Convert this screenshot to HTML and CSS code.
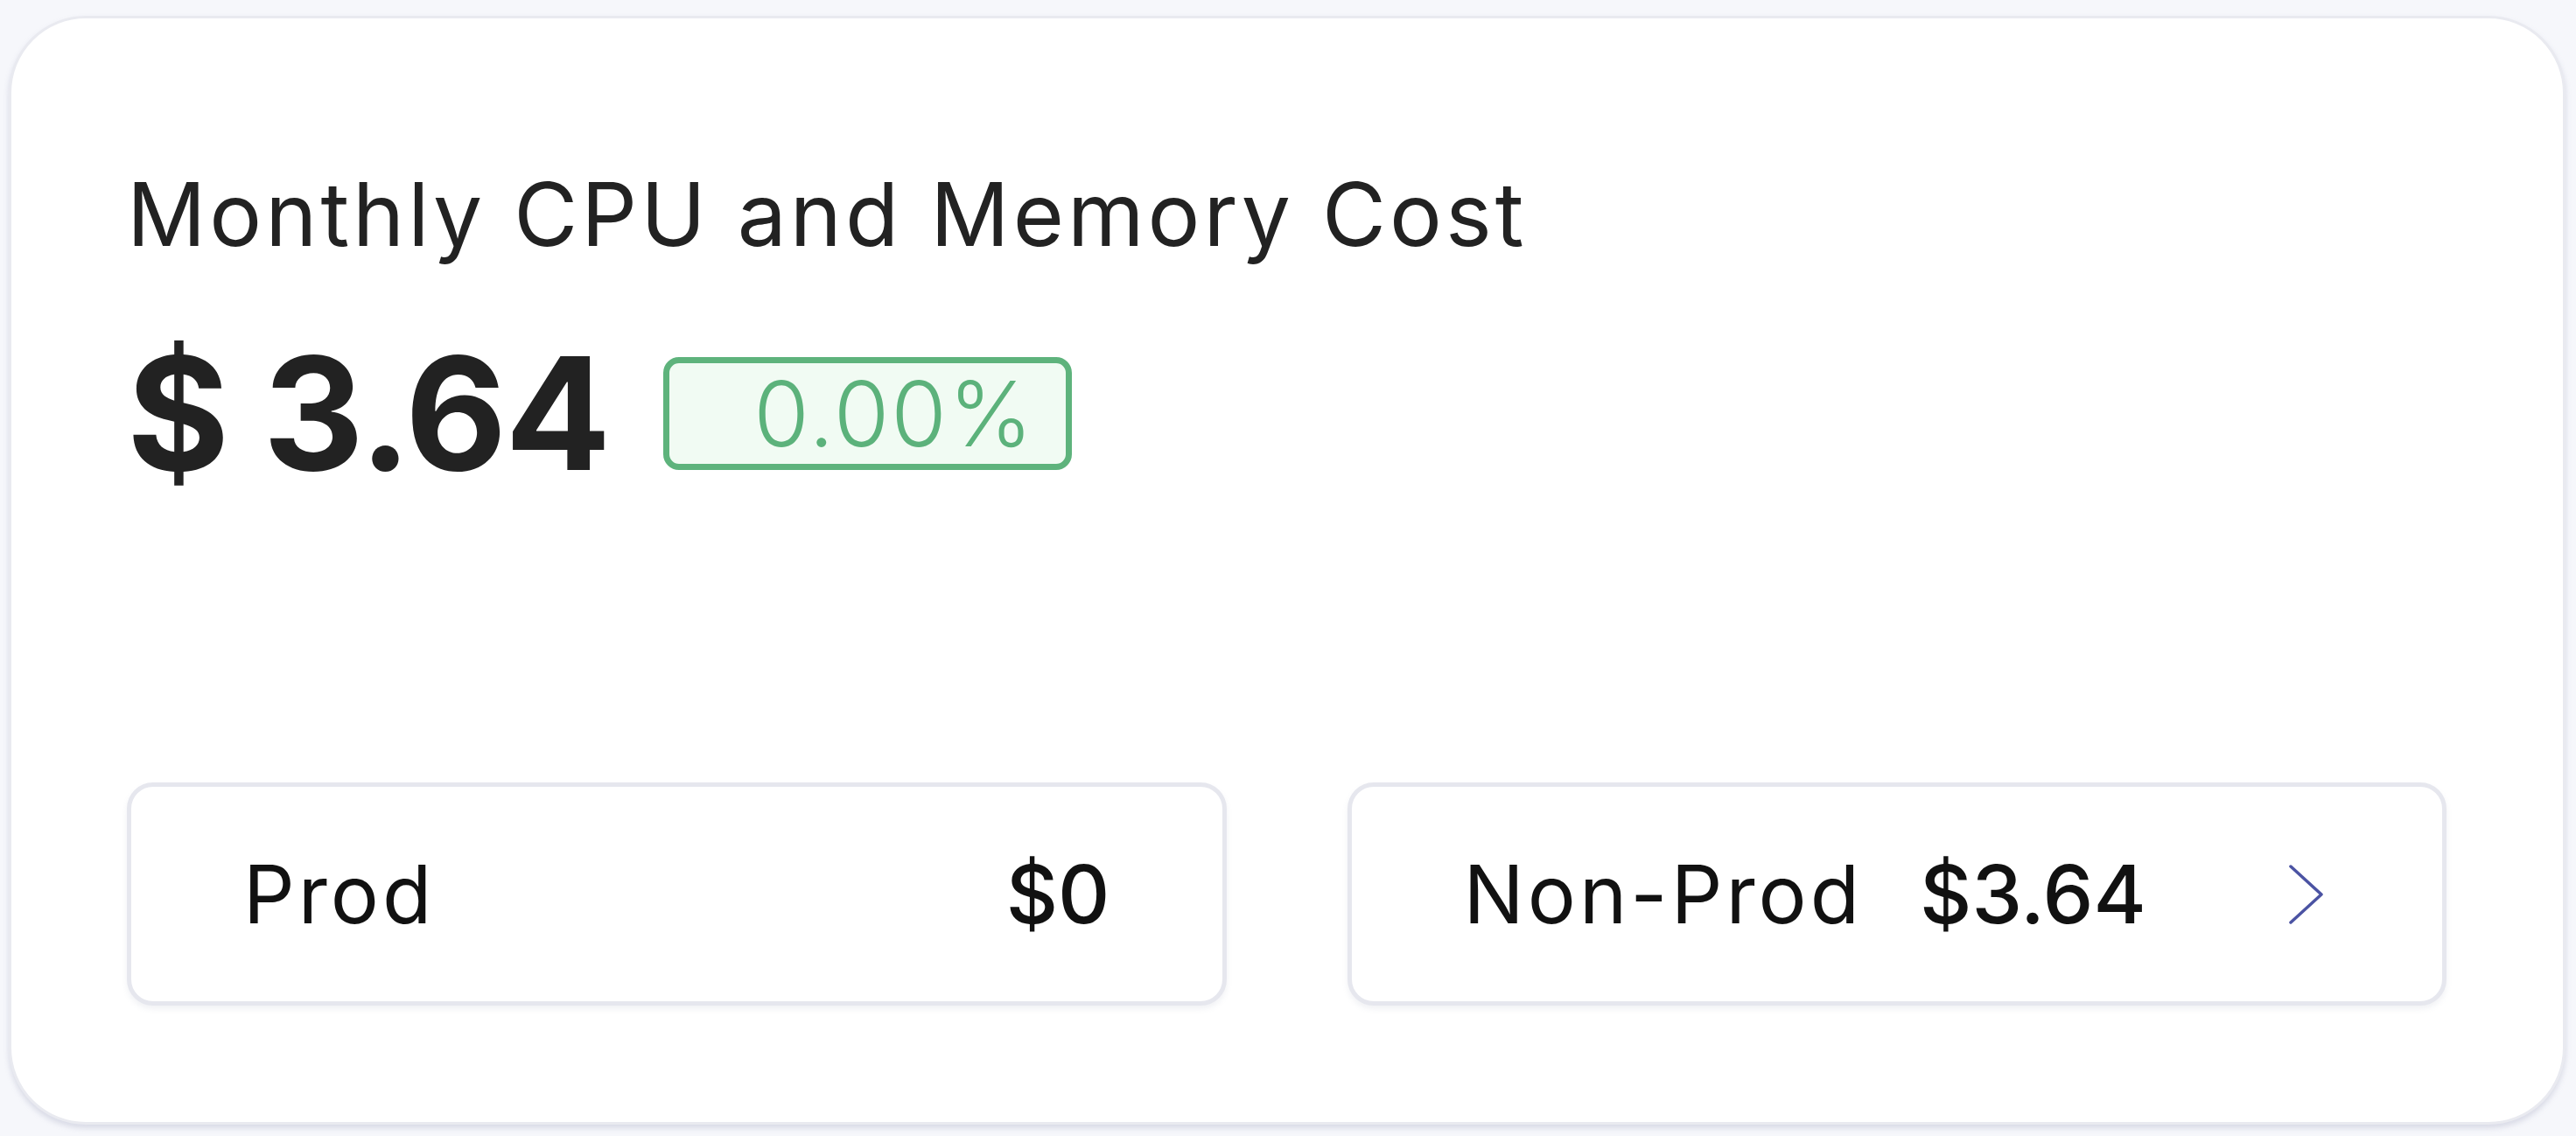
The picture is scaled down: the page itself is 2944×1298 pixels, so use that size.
FILE: index.html
```html
<!DOCTYPE html>
<html lang="en">
<head>
<meta charset="utf-8">
<title>Monthly CPU and Memory Cost</title>
<link rel="stylesheet" href="styles.css">
</head>
<body>
  <section class="card">
    <h2 class="title">Monthly CPU and Memory Cost</h2>
    <div class="total-row">
      <span class="total">$ 3.64</span>
      <span class="badge">0.00%</span>
    </div>
    <div class="envs">
      <div class="env">
        <span class="env-label">Prod</span>
        <span class="env-value">$0</span>
      </div>
      <div class="env env-link">
        <span class="env-label">Non-Prod</span>
        <span class="env-value">$3.64</span>
        <svg class="chevron" width="44" height="70" viewBox="0 0 44 70" aria-hidden="true">
          <path d="M5 3 L40 35 L5 67" fill="none" stroke="#4b53a3" stroke-width="3.5" stroke-linecap="round" stroke-linejoin="round"/>
        </svg>
      </div>
    </div>
  </section>
</body>
</html>
```

FILE: styles.css
```css
html, body {
  margin: 0;
  background: #f6f7fb;
}

body {
  padding: 18px 12px 13px 10px;
  font-family: "Inter", "Liberation Sans", sans-serif;
  color: #222222;
}

.card {
  background: #ffffff;
  border: 3px solid #e9eaf0;
  border-radius: 88px;
  box-shadow: 0 4px 6px rgba(140, 145, 175, 0.28);
  padding: 174px 133px 133px 132px;
}

.title {
  margin: 0;
  font-size: 100px;
  line-height: 1;
  font-weight: 400;
  color: #222222;
  letter-spacing: 4px;
}

.total-row {
  display: flex;
  align-items: center;
  gap: 62px;
  margin-top: 88px;
  height: 179px;
}

.total {
  font-size: 179px;
  line-height: 1;
  font-weight: 700;
  color: #222222;
  letter-spacing: -2px;
}

.badge {
  display: flex;
  align-items: center;
  box-sizing: border-box;
  height: 129px;
  padding: 0 36px 0 96px;
  border: 7px solid #5eb37c;
  border-radius: 18px;
  background: #f1fbf3;
  color: #5cb27b;
  font-size: 103px;
  font-weight: 300;
  line-height: 1;
  letter-spacing: 2px;
}

.envs {
  display: flex;
  gap: 138px;
  margin-top: 332px;
}

.env {
  flex: 1;
  display: flex;
  align-items: center;
  justify-content: space-between;
  box-sizing: border-box;
  height: 255px;
  padding: 0 128px;
  border: 5px solid #e6e7ee;
  border-radius: 30px;
  box-shadow: 0 4px 6px rgba(140, 145, 175, 0.12);
  background: #ffffff;
  color: #111111;
}

.env-link {
  justify-content: flex-start;
  gap: 65px;
}

.env-label {
  font-size: 92px;
  font-weight: 400;
  line-height: 1;
  letter-spacing: 4px;
}

.env-value {
  font-size: 92px;
  font-weight: 500;
  line-height: 1;
}

.chevron {
  display: block;
  margin-left: auto;
  margin-right: 6px;
}
```
